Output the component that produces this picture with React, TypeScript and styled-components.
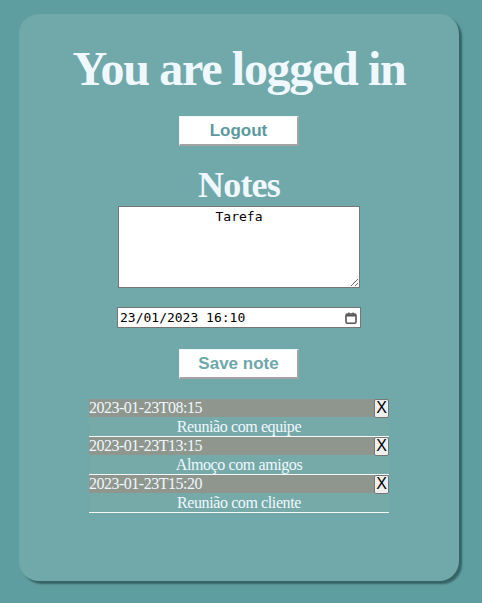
import React from "react";
import styled, { createGlobalStyle } from "styled-components";

const Global = createGlobalStyle`
  html, body {
    margin: 0;
    padding: 0;
    background: #5f9ea0;
  }
  body {
    font-family: "Liberation Serif", "Times New Roman", serif;
  }
`;

const Page = styled.div`
  padding: 14px 0 20px 19px;
`;

const Card = styled.main`
  width: 440px;
  box-sizing: border-box;
  background: #71a8aa;
  border-radius: 20px;
  box-shadow: 3px 3px 2px rgba(40, 80, 82, 0.75);
  padding: 27px 0 68px;
  display: flex;
  flex-direction: column;
  align-items: center;
`;

const Title = styled.h1<{ $size: number; $lh: number; $ls: number }>`
  margin: 0;
  font-family: "Liberation Serif", "Times New Roman", serif;
  font-weight: bold;
  font-size: ${(p) => p.$size}px;
  letter-spacing: ${(p) => p.$ls}px;
  color: #f0f8ff;
  line-height: ${(p) => p.$lh}px;
`;

const Button = styled.button<{ $color: string }>`
  width: 120px;
  height: 30px;
  box-sizing: border-box;
  margin: 20px 0 19px;
  background: #ffffff;
  border-style: solid;
  border-width: 1px 2px 2px 1px;
  border-color: #eef6fa #a3a3a3 #a3a3a3 #eef6fa;
  font-family: "Liberation Sans", Arial, sans-serif;
  font-weight: bold;
  font-size: 17px;
  color: ${(p) => p.$color};
  padding: 0;
  cursor: pointer;
`;

const NoteText = styled.textarea`
  width: 242px;
  height: 82px;
  box-sizing: border-box;
  margin: 0;
  padding: 2px;
  border: 1px solid #767676;
  font-family: "DejaVu Sans Mono", monospace;
  font-size: 13px;
  text-align: center;
  color: #000;
  background: #fff;
`;

const DateBox = styled.label`
  margin-top: 19px;
  width: 244px;
  height: 21px;
  box-sizing: border-box;
  border: 1px solid #767676;
  background: #fff;
  display: flex;
  align-items: center;
  padding: 0 3px 0 2px;
`;

const DateText = styled.input`
  flex: 1;
  min-width: 0;
  border: none;
  outline: none;
  padding: 0;
  margin: 0;
  font-family: "DejaVu Sans Mono", monospace;
  font-size: 13px;
  color: #000;
  background: transparent;
`;

const SaveButton = styled(Button)`
  margin: 21px 0 20px;
`;

const List = styled.ul`
  list-style: none;
  margin: 0;
  padding: 0;
  width: 300px;
`;

const Item = styled.li`
  border-bottom: 1px solid #f4f8f8;
`;

const DateRow = styled.div`
  height: 18px;
  background: #8e968e;
  display: flex;
  align-items: center;
  justify-content: space-between;
  color: #f0f8ff;
  font-size: 16px;
  letter-spacing: -0.5px;
`;

const DeleteButton = styled.button`
  height: 19px;
  padding: 0 1px;
  margin: 0;
  border: 1px solid #767676;
  border-radius: 2px;
  background: #efefef;
  font-family: "Liberation Sans", Arial, sans-serif;
  font-size: 16px;
  line-height: 16px;
  letter-spacing: 0;
  color: #000;
`;

const Desc = styled.div`
  background: #76aaa8;
  text-align: center;
  color: #f0f8ff;
  font-size: 16px;
  line-height: 19px;
  letter-spacing: -0.4px;
`;

const CalendarIcon = () => (
  <svg width="12" height="12" viewBox="0 0 12 12" aria-hidden="true">
    <rect x="1" y="2" width="10" height="9.2" rx="1.5" fill="none" stroke="#555" strokeWidth="1.6" />
    <rect x="1" y="2.5" width="10" height="2" fill="#555" />
    <rect x="3.2" y="0.5" width="1.4" height="2" fill="#555" />
    <rect x="7.4" y="0.5" width="1.4" height="2" fill="#555" />
  </svg>
);

const notes = [
  { date: "2023-01-23T08:15", text: "Reunião com equipe" },
  { date: "2023-01-23T13:15", text: "Almoço com amigos" },
  { date: "2023-01-23T15:20", text: "Reunião com cliente" },
];

export default function App() {
  return (
    <>
      <Global />
      <Page>
        <Card>
          <Title $size={48} $lh={55} $ls={-1.3}>You are logged in</Title>
          <Button $color="#5a9a9d">Logout</Button>
          <Title $size={36} $lh={41} $ls={-0.8}>Notes</Title>
          <NoteText defaultValue="Tarefa" />
          <DateBox>
            <DateText defaultValue="23/01/2023 16:10" />
            <CalendarIcon />
          </DateBox>
          <SaveButton $color="#6ca7a9">Save note</SaveButton>
          <List>
            {notes.map((n) => (
              <Item key={n.date}>
                <DateRow>
                  <span>{n.date}</span>
                  <DeleteButton>X</DeleteButton>
                </DateRow>
                <Desc>{n.text}</Desc>
              </Item>
            ))}
          </List>
        </Card>
      </Page>
    </>
  );
}
